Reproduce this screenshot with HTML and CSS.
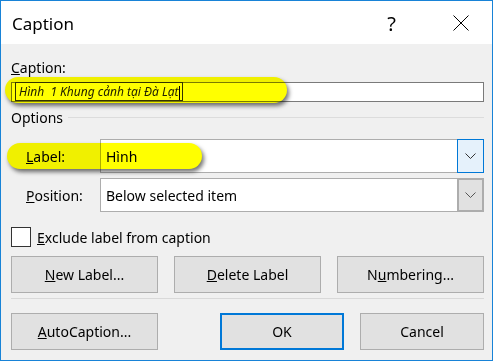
FILE: index.html
```html
<!DOCTYPE html>
<html lang="vi">
<head>
    <meta charset="UTF-8">
    <title>Caption</title>
    <link rel="stylesheet" href="styles.css">
</head>
<body>
<div class="window">
    <div class="titlebar">
        <span class="title">Caption</span>
        <span class="help">?</span>
        <svg class="close" width="16" height="16" viewBox="0 0 16 16">
            <path d="M0.5 0.5 L15.5 15.5 M15.5 0.5 L0.5 15.5" stroke="#000" stroke-width="1" fill="none"/>
        </svg>
    </div>
    <div class="content">
        <div class="fieldlabel"><u>C</u>aption:</div>
        <div class="captionbox">
            <span class="captiontext">Hình&nbsp; 1 Khung cảnh tại Đà Lạt<span class="caret"></span></span>
        </div>
        <div class="grouptitle">
            <span>Options</span>
            <div class="rule"></div>
        </div>
        <div class="optionrow">
            <span class="rowlabel"><u>L</u>abel:</span>
            <div class="combo">
                <span class="combotext">Hình</span>
                <div class="dropbtn active">
                    <svg width="11" height="7" viewBox="0 0 11 7"><polyline points="0.5,0.5 5.5,5.5 10.5,0.5" stroke="#333" fill="none"/></svg>
                </div>
            </div>
        </div>
        <div class="optionrow second">
            <span class="rowlabel"><u>P</u>osition:</span>
            <div class="combo">
                <span class="combotext">Below selected item</span>
                <div class="dropbtn">
                    <svg width="11" height="7" viewBox="0 0 11 7"><polyline points="0.5,0.5 5.5,5.5 10.5,0.5" stroke="#555" fill="none"/></svg>
                </div>
            </div>
        </div>
        <div class="checkrow">
            <div class="checkbox"></div>
            <span><u>E</u>xclude label from caption</span>
        </div>
        <div class="buttonrow">
            <div class="btn"><u>N</u>ew Label...</div>
            <div class="btn"><u>D</u>elete Label</div>
            <div class="btn">N<u>u</u>mbering...</div>
        </div>
        <div class="separator"></div>
        <div class="buttonrow bottom">
            <div class="btn"><u>A</u>utoCaption...</div>
            <div class="btn small default">OK</div>
            <div class="btn small">Cancel</div>
        </div>
    </div>
    <div class="highlight hl-caption"></div>
    <div class="highlight hl-label"></div>
</div>
</body>
</html>
```
FILE: styles.css
```css
body {
    margin: 0;
    background: #ffffff;
    font-family: "Noto Sans", "Open Sans", sans-serif;
    font-size: 14px;
    color: #000000;
}

.window {
    position: relative;
    width: 493px;
    height: 361px;
    box-sizing: border-box;
    border: 1px solid #1883d7;
    background: #f0f0f0;
}

.titlebar {
    height: 43px;
    background: #ffffff;
    display: flex;
    align-items: center;
    padding-left: 11px;
}
.title {
    font-size: 17px;
    padding-top: 2px;
}
.help {
    margin-left: auto;
    font-size: 20px;
    padding-top: 2px;
}
.close {
    margin-left: 57px;
    margin-right: 23px;
}

.content {
    padding: 0 8px 0 10px;
}

.fieldlabel {
    margin-top: 14px;
    height: 20px;
    line-height: 20px;
}

.captionbox {
    margin-top: 4px;
    height: 20px;
    box-sizing: border-box;
    border: 1px solid #7a7a7a;
    background: #ffffff;
    display: flex;
}
.captiontext {
    margin-left: 3px;
    width: 168px;
    box-sizing: border-box;
    border: 1px solid #333333;
    margin-top: -1px;
    height: 19px;
    font-size: 12px;
    font-style: italic;
    line-height: 17px;
    padding-left: 3px;
    white-space: nowrap;
    color: #222222;
}
.caret {
    display: inline-block;
    width: 1px;
    height: 14px;
    background: #000000;
    vertical-align: middle;
}

.grouptitle {
    margin-top: 5px;
    height: 20px;
    display: flex;
    align-items: center;
}
.rule {
    flex: 1;
    height: 1px;
    background: #dcdcdc;
    margin-left: 5px;
}

.optionrow {
    margin-top: 12px;
    display: flex;
    align-items: center;
}
.optionrow.second {
    margin-top: 5px;
}
.rowlabel {
    width: 74px;
    padding-left: 15px;
}
.combo {
    flex: 1;
    height: 34px;
    box-sizing: border-box;
    border: 1px solid #adadad;
    background: #ffffff;
    display: flex;
    align-items: center;
}
.combotext {
    flex: 1;
    padding-left: 5px;
}
.dropbtn {
    width: 27px;
    height: 34px;
    box-sizing: border-box;
    margin: -1px -1px -1px 0;
    border: 2px solid #adadad;
    background: #e1e1e1;
    display: flex;
    align-items: center;
    justify-content: center;
}
.dropbtn.active {
    border: 1px solid #0078d7;
    background: #e5f1fb;
}

.checkrow {
    margin-top: 15px;
    height: 20px;
    display: flex;
    align-items: center;
}
.checkbox {
    width: 20px;
    height: 20px;
    box-sizing: border-box;
    border: 1px solid #333333;
    background: #ffffff;
    margin-right: 6px;
}

.buttonrow {
    margin-top: 9px;
    display: flex;
    gap: 16px;
}
.buttonrow.bottom {
    margin-top: 14px;
}
.btn {
    width: 147px;
    height: 37px;
    box-sizing: border-box;
    border: 1px solid #adadad;
    background: #e1e1e1;
    display: flex;
    align-items: center;
    justify-content: center;
}
.btn.small {
    width: 124px;
}
.btn.default {
    margin-left: auto;
    border: 2px solid #0078d7;
}

.separator {
    margin-top: 5px;
    height: 1px;
    background: #d9d9d9;
}

.highlight {
    position: absolute;
    height: 26px;
    border-radius: 13px;
    background: #ffff00;
    mix-blend-mode: multiply;
    box-shadow: 2px 3px 4px rgba(0, 0, 0, 0.55);
}
.hl-caption {
    left: 4px;
    top: 76px;
    width: 282px;
}
.hl-label {
    left: 6px;
    top: 142px;
    width: 195px;
}
```
